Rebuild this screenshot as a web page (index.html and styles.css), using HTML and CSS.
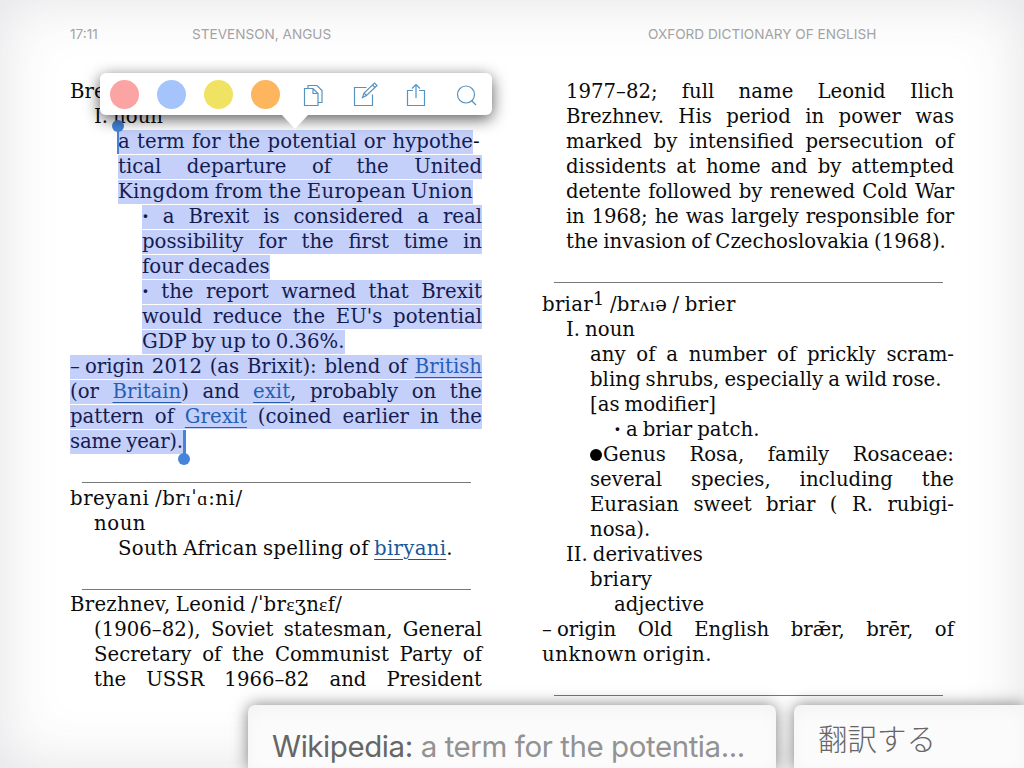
FILE: index.html
```
<!DOCTYPE html>
<html lang="en">
<head>
    <meta charset="UTF-8">
    <meta name="viewport" content="width=device-width, initial-scale=1.0">
    <title>Oxford Dictionary of English</title>
    <link rel="stylesheet" href="styles.css">
</head>
<body>
    <header class="top">
        <span class="time">17:11</span>
        <span class="author">STEVENSON, ANGUS</span>
        <span class="book">OXFORD DICTIONARY OF ENGLISH</span>
    </header>

    <main class="pages">
        <section class="page">
            <article class="entry">
                <p>Brexit</p>
                <p class="in1">I. noun</p>
                <p class="in2 full"><mark class="start">a term for the potential or hypothe</mark>-</p>
                <p class="in2 full"><mark>tical departure of the United</mark></p>
                <p class="in2 wide"><mark>Kingdom from the European Union</mark></p>
                <p class="in3 full"><mark><b>·</b> a Brexit is considered a real</mark></p>
                <p class="in3 full"><mark>possibility for the first time in</mark></p>
                <p class="in3"><mark>four decades</mark></p>
                <p class="in3 full"><mark><b>·</b> the report warned that Brexit</mark></p>
                <p class="in3 full"><mark>would reduce the EU's potential</mark></p>
                <p class="in3"><mark>GDP by up to 0.36%.</mark></p>
                <p class="full"><mark><span class="dash">–</span>origin 2012 (as Brixit): blend of <a>British</a></mark></p>
                <p class="full"><mark>(or <a>Britain</a>) and <a>exit</a>, probably on the</mark></p>
                <p class="full"><mark>pattern of <a>Grexit</a> (coined earlier in the</mark></p>
                <p class="close"><mark class="end">same year).</mark></p>
            </article>
            <hr>
            <article class="entry">
                <p class="wider">breyani /br<i>ɪ</i>ˈ<i>ɑ</i>:ni/</p>
                <p class="in1 wider">noun</p>
                <p class="in2 wide">South African spelling of <a>biryani</a>.</p>
            </article>
            <hr>
            <article class="entry">
                <p class="wide">Brezhnev, Leonid /ˈbr<i>ɛ</i>ʒn<i>ɛ</i>f/</p>
                <p class="in1 full">(1906–82), Soviet statesman, General</p>
                <p class="in1 full">Secretary of the Communist Party of</p>
                <p class="in1 full">the USSR 1966–82 and President</p>
            </article>
        </section>

        <section class="page">
            <article class="entry">
                <p class="in1 full">1977–82; full name Leonid Ilich</p>
                <p class="in1 full">Brezhnev. His period in power was</p>
                <p class="in1 full">marked by intensified persecution of</p>
                <p class="in1 full">dissidents at home and by attempted</p>
                <p class="in1 full tight">detente followed by renewed Cold War</p>
                <p class="in1 full tight">in 1968; he was largely responsible for</p>
                <p class="in1">the invasion of Czechoslovakia (1968).</p>
            </article>
            <hr>
            <article class="entry raised">
                <p class="wide">briar<sup>1</sup> /br<i>ʌɪ</i>ə / brier</p>
                <p class="in1">I. noun</p>
                <p class="in2 full">any of a number of prickly scram-</p>
                <p class="in2">bling shrubs, especially a wild rose.</p>
                <p class="in2">[as modifier]</p>
                <p class="in3"><b>·</b> a briar patch.</p>
                <p class="in2 full"><span class="dot"></span>Genus Rosa, family Rosaceae:</p>
                <p class="in2 full">several species, including the</p>
                <p class="in2 full">Eurasian sweet briar ( R. rubigi-</p>
                <p class="in2">nosa).</p>
                <p class="in1">II. derivatives</p>
                <p class="in2 wide">briary</p>
                <p class="in3">adjective</p>
                <p class="full"><span class="dash">–</span>origin Old English brǣr, brēr, of</p>
                <p class="wider">unknown origin.</p>
            </article>
            <hr>
        </section>
    </main>

    <div class="popover">
        <span class="color pink"></span>
        <span class="color blue"></span>
        <span class="color yellow"></span>
        <span class="color orange"></span>
        <svg class="icon copy" viewBox="0 0 26 26"><path d="M3.500 6.500h8.500l5 5v12h-13.500zM12 6.500v5h5M7 6.500v-3h9l5 5v12h-4"/></svg>
        <svg class="icon edit" viewBox="0 0 26 26"><path d="M14.500 5.500H2.500v18h18V12.500M10.500 15.500l1.500-4.500L22.500 1l2.500 2.500L14.500 13.500zM12 11l2.500 2.500M20.500 3l2.500 2.500"/></svg>
        <svg class="icon share" viewBox="0 0 26 26"><path d="M10 8.500H4.500v15h17v-15H16M13 16V2.500M9 6.500l4-4 4 4"/></svg>
        <svg class="icon find" viewBox="0 0 26 26"><circle cx="12" cy="12.500" r="8.500"/><path d="M17.500 18.500l4.500 4.500"/></svg>
    </div>

    <div class="panels">
        <div class="panel wiki"><span class="label">Wikipedia:</span> a term for the potentia...</div>
        <div class="panel translate" lang="ja">翻訳する</div>
    </div>
</body>
</html>
```

FILE: styles.css
```
* {
    box-sizing: border-box;
}
body {
    margin: 0;
    width: 1024px;
    height: 768px;
    overflow: hidden;
    position: relative;
    background: #fff;
    box-shadow: inset 0 0 60px rgba(60, 60, 80, 0.15);
    font-family: "DejaVu Serif", serif;
    font-size: 19.7px;
    line-height: 24px;
    word-spacing: -1.2px;
    color: #0b0b0b;
}
.top {
    display: grid;
    grid-template-columns: 122px 456px 1fr;
    height: 80px;
    padding: 22px 0 0 70px;
    font-family: Inter, "Liberation Sans", sans-serif;
    font-size: 13.6px;
    word-spacing: 0;
    color: #a3a3a3;
}
.pages {
    display: grid;
    grid-template-columns: 412px 412px;
    gap: 60px;
    padding-left: 70px;
}
p {
    margin: 0;
    height: 25px;
    white-space: nowrap;
}
.full {
    text-align-last: justify;
}
.tight {
    letter-spacing: -0.2px;
    word-spacing: -2px;
}
.close {
    letter-spacing: -0.2px;
}
.wide {
    letter-spacing: 0.28px;
}
.wider {
    letter-spacing: 0.55px;
}
.in1 {
    padding-left: 24px;
}
.in2 {
    padding-left: 48px;
}
.in3 {
    padding-left: 72px;
}
.raised {
    padding-top: 6.5px;
}
hr {
    border: none;
    height: 1px;
    margin: 27px 11px 3.5px 12px;
    background: #777;
}
a {
    color: #1a5796;
    text-decoration: underline;
    text-decoration-thickness: 1px;
    text-underline-offset: 4px;
}
i {
    font-family: "Liberation Serif", serif;
    font-style: normal;
    line-height: 0;
}
sup {
    font-size: 18px;
    line-height: 0;
    vertical-align: 6px;
}
mark {
    display: inline-block;
    height: 24px;
    background: #c4cffa;
    color: #141c50;
    position: relative;
}
.full mark {
    width: 100%;
}
.full mark.start {
    width: 355px;
}
mark a {
    color: #245fb5;
}
.dash {
    display: inline-block;
    width: 15px;
}
/* selection handles */
.start::before, .end::before {
    content: "";
    position: absolute;
    width: 2px;
    height: 24px;
    background: #4584d8;
}
.start::before {
    left: -1px;
    top: 0;
}
.end::before {
    right: -3px;
    width: 3px;
    top: 0;
}
.start::after, .end::after {
    content: "";
    position: absolute;
    width: 12px;
    height: 12px;
    border-radius: 50%;
    background: #4584d8;
}
.start::after {
    left: -6px;
    top: -10px;
}
.end::after {
    right: -7px;
    top: 23px;
}
.dot {
    display: inline-block;
    width: 12px;
    height: 12px;
    border-radius: 50%;
    background: #000;
    margin-right: 1px;
}
.popover {
    position: absolute;
    left: 100px;
    top: 73px;
    width: 392px;
    height: 42px;
    padding-left: 9.5px;
    display: flex;
    align-items: center;
    background: #fff;
    border-radius: 6px;
    box-shadow: 0 4px 16px rgba(0, 0, 0, 0.65);
}
.popover::after {
    content: "";
    position: absolute;
    left: 182px;
    top: 42px;
    border: 13px solid transparent;
    border-top: 14px solid #fff;
    border-bottom: 0;
}
.color {
    width: 29px;
    height: 29px;
    margin-right: 18px;
    border-radius: 50%;
}
.pink {
    background: #fca3a3;
}
.blue {
    background: #a5c4fc;
}
.yellow {
    background: #f0e263;
}
.orange {
    background: #fdb55e;
}
.icon {
    width: 26px;
    height: 26px;
    margin: 2px 0 0 25px;
    fill: none;
    stroke: #5793bf;
    stroke-width: 1.2;
}
.copy {
    margin-left: 3.5px;
}
.panels {
    position: absolute;
    left: 248px;
    top: 705px;
    display: flex;
    gap: 18px;
    word-spacing: 0;
    color: #929292;
}
.panel {
    height: 63px;
    background: #fbfbfb;
    border-radius: 7px 7px 0 0;
    box-shadow: 0 0 16px rgba(0, 0, 0, 0.5), inset 0 6px 16px rgba(0, 0, 0, 0.03);
    white-space: nowrap;
}
.wiki {
    width: 528px;
    padding: 29px 0 0 24px;
    font-family: Inter, sans-serif;
    font-size: 29.5px;
    letter-spacing: -0.43px;
}
.label {
    color: #666;
}
.translate {
    width: 230px;
    padding: 20px 0 0 24px;
    border-top-right-radius: 0;
    font-family: "Noto Sans CJK JP", sans-serif;
    font-weight: 300;
    font-size: 29.5px;
    color: #666;
}
```
